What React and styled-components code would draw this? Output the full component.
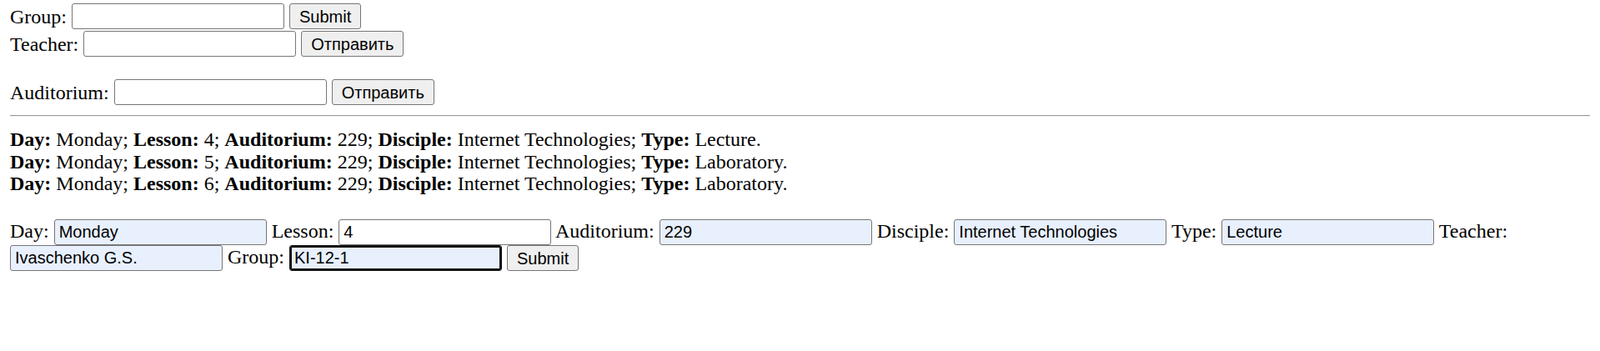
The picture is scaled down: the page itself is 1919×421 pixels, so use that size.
import styled, { createGlobalStyle } from "styled-components";

const GlobalStyle = createGlobalStyle`
  body {
    margin: 0;
    padding: 4px 12px;
    font-family: "Liberation Serif", "Times New Roman", serif;
    font-size: 24px;
    color: #000;
    background: #fff;
  }
`;

const SearchForm = styled.form`
  margin: 0;
  line-height: 33px;
  white-space: nowrap;
  margin-top: ${(props) => (props.$gap ? "25px" : "0")};
`;

const Field = styled.input`
  box-sizing: border-box;
  width: 255px;
  height: 31px;
  vertical-align: top;
  margin: 0;
  padding: 3px 5px;
  border: 1px solid #767676;
  border-radius: 3px;
  font-family: "Liberation Sans", Arial, sans-serif;
  font-size: 20px;
  line-height: 23px;
  color: #000;
  background-color: ${(props) => (props.$filled ? "#e8f0fe" : "#fff")};
  outline: none;
  box-shadow: ${(props) => (props.$focused ? "inset 0 0 0 2px #101010" : "none")};
  border-color: ${(props) => (props.$focused ? "#101010" : "#767676")};
`;

const Button = styled.button`
  box-sizing: border-box;
  height: 31px;
  vertical-align: top;
  margin: 0;
  padding: 2px 11px 0;
  border: 1px solid #767676;
  border-radius: 3px;
  background: #efefef;
  font-family: "Liberation Sans", Arial, sans-serif;
  font-size: 20px;
  line-height: 23px;
  color: #000;
`;

const Divider = styled.hr`
  margin: 10px 0 14px;
  height: 0;
  border: none;
  border-top: 1px solid #9a9a9a;
  border-bottom: 1px solid #eeeeee;
`;

const Lessons = styled.div`
  line-height: 26.6px;
`;

const Label = styled.b`
  font-weight: bold;
`;

const EditForm = styled.form`
  margin: 29px 0 0;
  line-height: 29px;
`;

const lessons = [
  { day: "Monday", lesson: 4, auditorium: 229, disciple: "Internet Technologies", type: "Lecture" },
  { day: "Monday", lesson: 5, auditorium: 229, disciple: "Internet Technologies", type: "Laboratory" },
  { day: "Monday", lesson: 6, auditorium: 229, disciple: "Internet Technologies", type: "Laboratory" },
];

const App = () => {
  const submitHandler = (e) => {
    e.preventDefault();
  };

  return (
    <>
      <GlobalStyle />
      <SearchForm onSubmit={submitHandler}>
        Group:{" "}<Field type="text" />{" "}<Button type="submit">Submit</Button>
      </SearchForm>
      <SearchForm onSubmit={submitHandler}>
        Teacher:{" "}<Field type="text" />{" "}<Button type="submit">Отправить</Button>
      </SearchForm>
      <SearchForm $gap onSubmit={submitHandler}>
        Auditorium:{" "}<Field type="text" />{" "}<Button type="submit">Отправить</Button>
      </SearchForm>
      <Divider />
      <Lessons>
        {lessons.map((l) => (
          <div key={l.lesson}>
            <Label>Day:</Label> {l.day}; <Label>Lesson:</Label> {l.lesson};{" "}
            <Label>Auditorium:</Label> {l.auditorium}; <Label>Disciple:</Label> {l.disciple};{" "}
            <Label>Type:</Label> {l.type}.
          </div>
        ))}
      </Lessons>
      <EditForm onSubmit={submitHandler}>
        Day:{" "}<Field $filled type="text" defaultValue="Monday" />{" "}
        Lesson:{" "}<Field type="text" defaultValue="4" />{" "}
        Auditorium:{" "}<Field $filled type="text" defaultValue="229" />{" "}
        Disciple:{" "}<Field $filled type="text" defaultValue="Internet Technologies" />{" "}
        Type:{" "}<Field $filled type="text" defaultValue="Lecture" />{" "}
        Teacher:{" "}<Field $filled type="text" defaultValue="Ivaschenko G.S." />{" "}
        Group:{" "}<Field $filled $focused type="text" defaultValue="KI-12-1" />{" "}
        <Button type="submit">Submit</Button>
      </EditForm>
    </>
  );
};

export default App;
